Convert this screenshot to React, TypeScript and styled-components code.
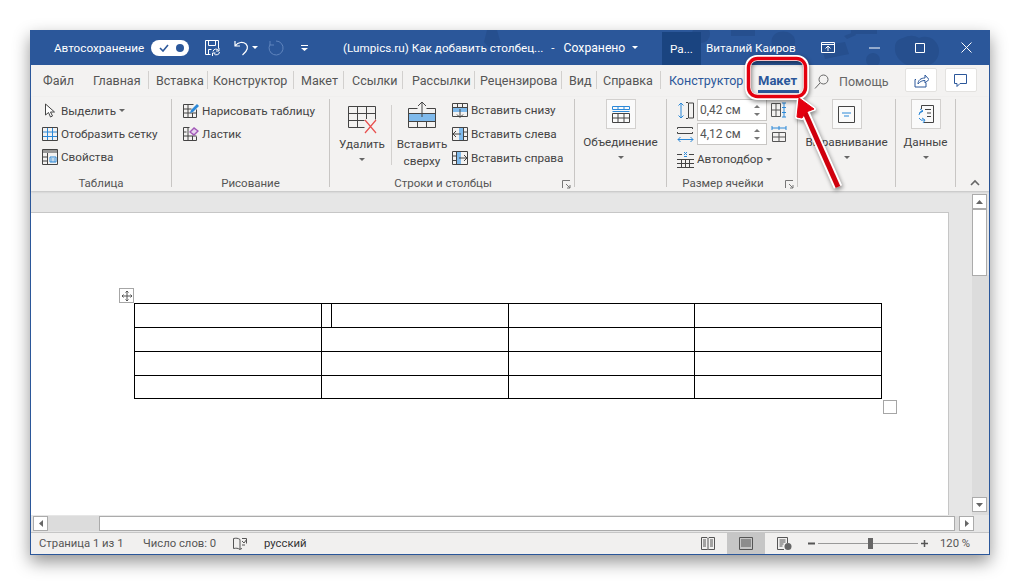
import type { ReactNode } from "react";
import styled, { createGlobalStyle } from "styled-components";

const BLUE = "#2b88d8";
const SKY = "#7fbaec";
const FONT = `Roboto, "Open Sans", "Liberation Sans", sans-serif`;

const GlobalStyle = createGlobalStyle`
  html, body {
    margin: 0;
    background: #fff;
  }
  body {
    font-family: ${FONT};
    font-size: 11.7px;
    color: #444;
  }
`;

const Stage = styled.div`
  position: relative;
  width: 1020px;
  height: 585px;
  padding: 30px;
  box-sizing: border-box;
  overflow: hidden;
`;

const Win = styled.div`
  width: 960px;
  height: 525px;
  box-sizing: border-box;
  display: flex;
  flex-direction: column;
  background: #e6e6e6;
  border: 1px solid #2b579a;
  border-top: 0;
  box-shadow: 0 7px 16px rgba(0, 0, 0, 0.42);
`;

const IcoSvg = styled.svg`
  flex: none;
  display: block;
`;

/* title bar */
const TitleBar = styled.div`
  position: relative;
  flex: 0 0 35px;
  display: flex;
  align-items: center;
  background: #2b579a;
  color: #fff;
  white-space: nowrap;
  overflow: hidden;
`;

const Doodles = styled.svg`
  position: absolute;
  left: 0;
  top: 0;
`;

const Slot = styled.div<{ $w: number; $ml?: number }>`
  position: relative;
  flex: 0 0 ${(p) => p.$w}px;
  min-width: 0;
  margin-left: ${(p) => p.$ml ?? 0}px;
  display: flex;
  align-items: center;
`;

const DocName = styled.span<{ $ml?: number; $size?: number }>`
  margin-left: ${(p) => p.$ml ?? 0}px;
  font-size: ${(p) => p.$size ?? 11.7}px;
`;

const Toggle = styled.div`
  width: 38px;
  height: 16px;
  border-radius: 8px;
  background: #fff;
  display: flex;
  align-items: center;
  justify-content: space-between;
  padding: 0 5px 0 8px;
  box-sizing: border-box;
`;

const ToggleDot = styled.span`
  width: 8px;
  height: 8px;
  border-radius: 50%;
  background: #2b579a;
`;

const Account = styled.div`
  position: relative;
  flex: 0 0 39px;
  align-self: flex-end;
  height: 33px;
  display: flex;
  align-items: center;
  justify-content: center;
  background: #1a4480;
`;

const Caret = styled.span<{ $color?: string; $ml?: number }>`
  display: inline-block;
  width: 0;
  height: 0;
  margin-left: ${(p) => p.$ml ?? 0}px;
  border-left: 3px solid transparent;
  border-right: 3px solid transparent;
  border-top: 3px solid ${(p) => p.$color ?? "#666"};
`;

/* tabs */
const TabRow = styled.div`
  flex: 0 0 32px;
  display: flex;
  align-items: center;
  background: #f3f2f1;
  white-space: nowrap;
`;

const Tab = styled.div<{ $w: number; $pad: number; $sep?: boolean; $blue?: boolean }>`
  position: relative;
  flex: 0 0 ${(p) => p.$w}px;
  box-sizing: border-box;
  height: 32px;
  line-height: 32px;
  padding-left: ${(p) => p.$pad}px;
  font-size: 12.5px;
  color: ${(p) => (p.$blue ? "#2b579a" : "#555")};
  overflow: hidden;
  &::after {
    content: "";
    display: ${(p) => (p.$sep ? "block" : "none")};
    position: absolute;
    right: 0;
    top: 6px;
    height: 18px;
    width: 1px;
    background: #d2d0ce;
  }
`;

const ActiveTab = styled(Tab)`
  font-size: 13px;
  font-weight: 700;
`;

const TabMark = styled.span`
  position: absolute;
  left: 0;
  right: 0;
  bottom: 4px;
  height: 3px;
  background: #2b579a;
`;

const HelpBox = styled.div`
  flex: 0 0 76px;
  margin-left: 15px;
  display: flex;
  align-items: center;
  gap: 10px;
  font-size: 12.5px;
  color: #666;
`;

const TopButton = styled.div<{ $ml: number }>`
  flex: 0 0 32px;
  height: 24px;
  margin: 0 0 2px ${(p) => p.$ml}px;
  display: flex;
  align-items: center;
  justify-content: center;
  background: #fff;
  border: 1px solid #e3e2e0;
  box-sizing: border-box;
  border-radius: 2px;
`;

/* ribbon */
const Ribbon = styled.div`
  flex: 0 0 94px;
  box-sizing: border-box;
  padding: 2px 0 4px;
  display: flex;
  background: #f3f2f1;
  box-shadow: 0 1px 2px rgba(0, 0, 0, 0.16);
  position: relative;
  z-index: 1;
`;

const Group = styled.div<{ $w: number; $last?: boolean }>`
  position: relative;
  flex: 0 0 ${(p) => p.$w}px;
  min-width: 0;
  box-sizing: border-box;
  display: flex;
  flex-direction: column;
  border-right: ${(p) => (p.$last ? "0" : "1px solid #c8c6c4")};
`;

const GroupBody = styled.div<{ $pad?: number }>`
  flex: 1;
  display: flex;
  padding-left: ${(p) => p.$pad ?? 0}px;
  white-space: nowrap;
`;

const GroupLabel = styled.div<{ $pr?: number }>`
  height: 16px;
  line-height: 16px;
  margin-bottom: -4px;
  padding-right: ${(p) => p.$pr ?? 0}px;
  text-align: center;
  font-size: 11.5px;
  color: #555;
`;

const Launcher = styled.svg`
  position: absolute;
  right: 3px;
  bottom: -2px;
`;

const SmallList = styled.div<{ $ml?: number; $mt?: number }>`
  display: flex;
  flex-direction: column;
  margin-left: ${(p) => p.$ml ?? 0}px;
  margin-top: ${(p) => p.$mt ?? 0}px;
`;

const SmallRow = styled.div<{ $h?: number }>`
  height: ${(p) => p.$h ?? 23}px;
  display: flex;
  align-items: center;
  gap: 3px;
`;

const BigButton = styled.div<{ $w: number; $ml?: number }>`
  flex: 0 0 ${(p) => p.$w}px;
  min-width: 0;
  margin-left: ${(p) => p.$ml ?? 0}px;
  display: flex;
  flex-direction: column;
  align-items: center;
  text-align: center;
  line-height: 17px;
`;

const BigIcon = styled.div<{ $top: number }>`
  height: 37px;
  box-sizing: border-box;
  padding-top: ${(p) => p.$top}px;
`;

const BoxIcon = styled.div`
  width: 30px;
  height: 30px;
  box-sizing: border-box;
  margin-bottom: 5px;
  display: flex;
  align-items: center;
  justify-content: center;
  background: #fafafa;
  border: 1px solid #d2d0ce;
`;

const CaretRow = styled.div`
  height: 13px;
  display: flex;
  align-items: center;
  justify-content: center;
`;

const VSep = styled.div`
  flex: 0 0 1px;
  height: 60px;
  margin: 6px 0 0 4px;
  background: #d2d0ce;
`;

const SizeRow = styled.div<{ $mb?: number; $mt?: number }>`
  height: 22px;
  margin-top: ${(p) => p.$mt ?? 0}px;
  margin-bottom: ${(p) => p.$mb ?? 2}px;
  display: flex;
  align-items: center;
  gap: 3px;
`;

const Spin = styled.div`
  width: 70px;
  height: 22px;
  box-sizing: border-box;
  padding: 0 6px 0 2px;
  margin-right: 1px;
  display: flex;
  align-items: center;
  justify-content: space-between;
  background: #fff;
  border: 1px solid #c8c6c4;
  font-size: 12px;
  color: #555;
`;

const SpinArrows = styled.div`
  display: flex;
  flex-direction: column;
  gap: 5px;
`;

const SpinUp = styled(Caret)`
  border-top: 0;
  border-bottom: 3px solid #777;
`;

const Collapse = styled.svg`
  position: absolute;
  left: 14px;
  bottom: 1px;
`;

/* document */
const Doc = styled.div`
  flex: 1;
  min-height: 0;
  display: flex;
`;

const PageArea = styled.div`
  flex: 0 0 941px;
  padding-top: 21px;
  box-sizing: border-box;
`;

const Page = styled.div`
  width: 918px;
  height: 303px;
  box-sizing: border-box;
  padding: 90px 0 0 103px;
  background: #fff;
  border-top: 1px solid #c6c6c6;
  border-right: 1px solid #c6c6c6;
`;

const TableWrap = styled.div`
  position: relative;
  width: 747px;
`;

const WordTable = styled.table`
  border-collapse: collapse;
  table-layout: fixed;
  width: 747px;
  td {
    border: 1px solid #000;
    height: 23px;
    padding: 0;
  }
  tr:last-child td {
    height: 22px;
  }
`;

const MoveHandle = styled.div`
  position: absolute;
  left: -15px;
  top: -15px;
  width: 15px;
  height: 15px;
  box-sizing: border-box;
  border: 1px solid #a6a6a6;
  display: flex;
  align-items: center;
  justify-content: center;
`;

const SizeHandle = styled.div`
  position: absolute;
  right: -16px;
  bottom: -15px;
  width: 14px;
  height: 14px;
  box-sizing: border-box;
  border: 1px solid #a6a6a6;
`;

const VScroll = styled.div`
  flex: 0 0 17px;
  display: flex;
  flex-direction: column;
  padding: 3px 1px 3px 0;
  box-sizing: border-box;
  background: linear-gradient(#e6e6e6 84px, #dcdcdc 84px);
`;

const ScrollBtn = styled.div`
  width: 15px;
  height: 15px;
  flex: 0 0 15px;
  box-sizing: border-box;
  background: #fff;
  border: 1px solid #ababab;
  display: flex;
  align-items: center;
  justify-content: center;
`;

const VThumb = styled.div`
  width: 15px;
  height: 67px;
  box-sizing: border-box;
  background: #fff;
  border: 1px solid #ababab;
`;

const VTrack = styled.div`
  flex: 1;
`;

const HScroll = styled.div`
  flex: 0 0 17px;
  display: flex;
  align-items: center;
  box-sizing: border-box;
  padding-left: 2px;
  background: #e6e6e6;
`;

const HTrack = styled.div<{ $w: number }>`
  flex: 0 0 ${(p) => p.$w}px;
  height: 15px;
  background: #dcdcdc;
`;

const HThumb = styled.div`
  flex: 0 0 856px;
  height: 15px;
  box-sizing: border-box;
  background: #fff;
  border: 1px solid #ababab;
`;

/* status bar */
const Status = styled.div`
  flex: 0 0 22px;
  display: flex;
  align-items: center;
  background: #f1f0ef;
  border-top: 1px solid #c6c6c6;
  box-sizing: border-box;
  font-size: 11.3px;
  color: #555;
  white-space: nowrap;
`;

const StatusItem = styled.div<{ $w: number; $ml?: number; $dark?: boolean }>`
  flex: 0 0 ${(p) => p.$w}px;
  min-width: 0;
  margin-left: ${(p) => p.$ml ?? 0}px;
  display: flex;
  align-items: center;
  color: ${(p) => (p.$dark ? "#333" : "#555")};
`;

const ViewButton = styled.div<{ $active?: boolean; $ml?: number }>`
  flex: 0 0 38px;
  height: 21px;
  margin-left: ${(p) => p.$ml ?? 0}px;
  display: flex;
  align-items: center;
  justify-content: center;
  background: ${(p) => (p.$active ? "#c6c6c6" : "transparent")};
`;

const Slider = styled.div`
  position: relative;
  flex: 0 0 100px;
  margin-left: 3px;
  height: 1px;
  background: #999;
`;

const SliderThumb = styled.span`
  position: absolute;
  left: 50px;
  top: -5px;
  width: 5px;
  height: 11px;
  background: #666;
`;

const Overlay = styled.svg`
  position: absolute;
  left: 0;
  top: 0;
  z-index: 2;
  pointer-events: none;
  filter: drop-shadow(1px 2px 2px rgba(0, 0, 0, 0.45));
`;

function Ico({ w = 16, h = 16, children }: { w?: number; h?: number; children: ReactNode }) {
  return (
    <IcoSvg width={w} height={h} viewBox={`0 0 ${w} ${h}`} fill="none">
      {children}
    </IcoSvg>
  );
}

const tabs = [
  { label: "Файл", w: 62, pad: 12 },
  { label: "Главная", w: 56, pad: 0, sep: true },
  { label: "Вставка", w: 59, pad: 7, sep: true },
  { label: "Конструктор", w: 86, pad: 5, sep: true },
  { label: "Макет", w: 50, pad: 7, sep: true },
  { label: "Ссылки", w: 59, pad: 8, sep: true },
  { label: "Рассылки", w: 72, pad: 9, sep: true },
  { label: "Рецензирова", w: 87, pad: 5, sep: true },
  { label: "Вид", w: 35, pad: 7, sep: true },
  { label: "Справка", w: 64, pad: 6, sep: true },
  { label: "Конструктор", w: 97, pad: 8, blue: true },
];

export default function App() {
  return (
    <Stage>
      <GlobalStyle />
      <Win>
        <TitleBar>
          <Doodles width="960" height="35" viewBox="0 0 960 35" fill="#264f8e">
            <path d="M872 8c6-3 11-3 16 0 10-4 20 3 20 13 0 8-6 14-12 14h-20c-7-3-13-10-12-18 0-5 3-8 8-9z" />
            <path d="M813 6l10-4 2 3-9 4zM790 16l24-4 4 12-24 5z" />
            <path d="M744 4c8-5 18-2 20 6 1 8-5 13-12 14-9 0-16-13-8-20z" />
            <path d="M820 0h26v4h-26zM700 0h24v6h-24zM456 0h10l4 14-10 6-7-8z" />
            <circle cx="670" cy="4" r="9" />
            <circle cx="842" cy="30" r="7" />
          </Doodles>
          <Slot $w={97} $ml={23}>Автосохранение</Slot>
          <Slot $w={38}>
            <Toggle>
              <Ico w={10} h={8}><path d="M1 4l3 3 5-6" stroke="#2b579a" strokeWidth="1.6" /></Ico>
              <ToggleDot />
            </Toggle>
          </Slot>
          <Slot $w={16} $ml={15}>
            <Ico h={17}>
              <path d="M1.5 15.500v-14h13v8M4.500 1.500v5h7v-5M1.500 15.500h5M4.500 15.500v-5h3" stroke="#fff" />
              <path d="M9 12.500a3 3 0 0 1 5.500-1M15.500 13a3 3 0 0 1-5.500 1.500" stroke="#fff" />
              <path d="M15 9v3h-3M8.500 17v-3h3" stroke="#fff" />
            </Ico>
          </Slot>
          <Slot $w={15} $ml={14}>
            <Ico w={15} h={17}>
              <path d="M1 2v5h5M1.500 6.500C4 3 9 2.500 12 5c2.500 2.500 2 6.500-3.500 11" stroke="#fff" strokeWidth="1.200" />
            </Ico>
          </Slot>
          <Slot $w={6} $ml={3}><Caret $color="#fff" /></Slot>
          <Slot $w={16} $ml={10}>
            <Ico h={17}>
              <path d="M8 2a7 7 0 1 1-6 3.500" stroke="#5f84bd" />
              <path d="M2 2v4h4" stroke="#5f84bd" />
            </Ico>
          </Slot>
          <Slot $w={7} $ml={17}>
            <Ico w={7} h={8}><path d="M0 1.500h7" stroke="#fff" /><path d="M0 4l3.500 3L7 4z" fill="#fff" /></Ico>
          </Slot>
          <Slot $w={319} $ml={35}>
            <DocName>(Lumpics.ru) Как добавить столбец...</DocName>
            <DocName $ml={8}>-</DocName>
            <DocName $ml={9} $size={12.2}>Сохранено</DocName>
            <Caret $color="#fff" $ml={7} />
          </Slot>
          <Account>Ра...</Account>
          <Slot $w={100} $ml={5}>Виталий Каиров</Slot>
          <Slot $w={14} $ml={15}>
            <Ico w={14} h={11}>
              <path d="M.5.500h13v10H.500zM.500 2.500h13" stroke="#fff" />
              <path d="M7 9V4.500M4.500 6.500L7 4l2.500 2.500" stroke="#fff" />
            </Ico>
          </Slot>
          <Slot $w={11} $ml={34}><Ico w={11} h={2}><path d="M0 1h11" stroke="#fff" /></Ico></Slot>
          <Slot $w={10} $ml={35}><Ico w={10} h={10}><path d="M.5.500h9v9h-9z" stroke="#fff" /></Ico></Slot>
          <Slot $w={11} $ml={36}><Ico w={11} h={11}><path d="M.5.500l10 10M10.500.500l-10 10" stroke="#fff" /></Ico></Slot>
        </TitleBar>

        <TabRow>
          {tabs.map((t, i) => (
            <Tab key={i} $w={t.w} $pad={t.pad} $sep={t.sep} $blue={t.blue}>{t.label}</Tab>
          ))}
          <ActiveTab $w={41} $pad={0} $blue>
            Макет
            <TabMark />
          </ActiveTab>
          <HelpBox>
            <Ico w={15} h={15}>
              <circle cx="9.500" cy="5.500" r="4.500" stroke="#666" />
              <path d="M6 9L1 14.500" stroke="#666" />
            </Ico>
            Помощь
          </HelpBox>
          <TopButton $ml={15}>
            <Ico w={15} h={15}>
              <path d="M2 6.500h-1v7.500h11v-4" stroke="#2b579a" />
              <path d="M4 11c0-4 3-6 7-6V2l4 4.500L11 10V7.500c-3 0-5 1-7 3.500z" stroke="#2b579a" />
            </Ico>
          </TopButton>
          <TopButton $ml={8}>
            <Ico w={14} h={13}>
              <path d="M.5.500h12v9H6l-3 3v-3H.500z" stroke="#2b579a" />
            </Ico>
          </TopButton>
        </TabRow>

        <Ribbon>
          <Group $w={141}>
            <GroupBody $pad={11}>
              <SmallList>
                <SmallRow>
                  <Ico>
                    <path d="M3.500 1v11l3-2.500 2 4.500 2-1-2-4h4z" stroke="#444" fill="#fff" />
                  </Ico>
                  Выделить <Caret />
                </SmallRow>
                <SmallRow>
                  <Ico h={14}>
                    <path d="M.5.500h15v13H.500z" stroke="#444" />
                    <path d="M5.500 1v12M10.500 1v12M1 5h14M1 9.500h14" stroke={BLUE} />
                  </Ico>
                  Отобразить сетку
                </SmallRow>
                <SmallRow>
                  <Ico>
                    <path d="M.5.500h15v15H.500z" stroke="#444" />
                    <path d="M1 1h14v3H1z" fill="#999" />
                    <path d="M1 8h5M1 12h5M5.500 4v11" stroke="#444" />
                    <path d="M8 8h6v5H8z" stroke={BLUE} />
                    <path d="M9 10h1.500M11.500 10H13M9 12h1.500M11.500 12H13" stroke={BLUE} />
                  </Ico>
                  Свойства
                </SmallRow>
              </SmallList>
            </GroupBody>
            <GroupLabel>Таблица</GroupLabel>
          </Group>

          <Group $w={158}>
            <GroupBody $pad={11}>
              <SmallList>
                <SmallRow>
                  <Ico h={15}>
                    <path d="M.5 1.500h10M.500 1.500v13h13v-8M5 2v12M.500 6h8M.500 10h13M9.500 10v4" stroke="#444" />
                    <path d="M7 10l1-3 6-6 2 2-6 6z" fill={BLUE} />
                  </Ico>
                  Нарисовать таблицу
                </SmallRow>
                <SmallRow>
                  <Ico h={15}>
                    <path d="M.5 1.500h6M.500 1.500v13h13v-4M5 2v12M.500 6h3M.500 10h13M9.500 10v4" stroke="#444" />
                    <path d="M6 6l5-5 5 4-5 5z" fill="#a259b8" />
                    <path d="M8 6l3-3 3 2-3 3z" fill="#e6d4ec" />
                  </Ico>
                  Ластик
                </SmallRow>
              </SmallList>
            </GroupBody>
            <GroupLabel>Рисование</GroupLabel>
          </Group>

          <Group $w={245}>
            <GroupBody>
              <BigButton $w={50} $ml={7}>
                <BigIcon $top={7}>
                  <Ico w={30} h={28}>
                    <path d="M1.500.500h27v13M1.500.500v21h16M1.500 7.500h27M1.500 14.500h16M10.500 1v20M19.500 1v12" stroke="#444" />
                    <path d="M18 14l11 13M29 14L18 27" stroke="#e8504f" strokeWidth="1.200" />
                  </Ico>
                </BigIcon>
                Удалить
                <CaretRow><Caret /></CaretRow>
              </BigButton>
              <VSep />
              <BigButton $w={44} $ml={8}>
                <BigIcon $top={2}>
                  <Ico w={28} h={27}>
                    <path d="M.5 7.500h9M18.500 7.500h9v19h-27v-19M.500 20.500h27M9.500 21v5M18.500 21v5" stroke="#444" />
                    <path d="M1 13h26v7H1z" fill={SKY} />
                    <path d="M1 12.500h26M14 1v15M10 5l4-4 4 4" stroke="#444" />
                  </Ico>
                </BigIcon>
                Вставить
                <br />
                сверху
              </BigButton>
              <SmallList $ml={8} $mt={-1}>
                <SmallRow $h={24}>
                  <Ico h={15}>
                    <path d="M.5.500h15v13H.500zM.500 4.500h15M5.500 1v3M10.500 1v3" stroke="#444" />
                    <path d="M1 5h14v4H1z" fill={SKY} />
                    <path d="M8 6v8M5 11.500l3 3 3-3" stroke="#444" />
                  </Ico>
                  Вставить снизу
                </SmallRow>
                <SmallRow $h={24}>
                  <Ico h={15}>
                    <path d="M.5.500h15v13H.500zM11.500 1v12M11.500 5h4M11.500 9.500h4" stroke="#444" />
                    <path d="M7 1h4v12H7z" fill={SKY} />
                    <path d="M9 7H1M4 4L1 7l3 3" stroke="#444" />
                  </Ico>
                  Вставить слева
                </SmallRow>
                <SmallRow $h={24}>
                  <Ico h={15}>
                    <path d="M.5.500h15v13H.500zM4.500 1v12M.500 5h4M.500 9.500h4" stroke="#444" />
                    <path d="M5 1h4v12H5z" fill={SKY} />
                    <path d="M7 7h8M12 4l3 3-3 3" stroke="#444" />
                  </Ico>
                  Вставить справа
                </SmallRow>
              </SmallList>
            </GroupBody>
            <GroupLabel $pr={18}>Строки и столбцы</GroupLabel>
            <Launcher width="9" height="9" viewBox="0 0 9 9" fill="none">
              <path d="M.5 8V.5H8M4 4l4 4M8 5v3H5" stroke="#777" />
            </Launcher>
          </Group>

          <Group $w={92}>
            <GroupBody>
              <BigButton $w={91}>
                <BoxIcon>
                  <Ico w={18} h={17}>
                    <path d="M.5.500h17v3H.500z" stroke={BLUE} />
                    <path d="M6 1v3M12 1v3" stroke={BLUE} />
                    <path d="M.5 5.500h17" stroke={BLUE} />
                    <path d="M.5 7.500h17v9H.500zM.500 12h17M6 8v8M12 8v8" stroke="#444" />
                  </Ico>
                </BoxIcon>
                Объединение
                <CaretRow><Caret /></CaretRow>
              </BigButton>
            </GroupBody>
            <GroupLabel />
          </Group>

          <Group $w={131}>
            <GroupBody $pad={10}>
              <SmallList>
                <SizeRow>
                  <Ico w={17} h={17}>
                    <path d="M4 1v15M1.500 3.500L4 1l2.500 2.500M1.500 13.500L4 16l2.500-2.500" stroke={BLUE} />
                    <path d="M11.500 1h5v15h-5zM9 .500h2M9 16.500h2" stroke="#444" />
                  </Ico>
                  <Spin>
                    0,42 см
                    <SpinArrows><SpinUp /><Caret $color="#777" /></SpinArrows>
                  </Spin>
                  <Ico w={17} h={16}>
                    <path d="M.5 1.500h9v13h-9zM.500 8h9M5 2v12" stroke="#555" />
                    <path d="M13 1v14M11 1h4M11 15h4M11 5.500h4M11 10.500h4" stroke={BLUE} />
                  </Ico>
                </SizeRow>
                <SizeRow>
                  <Ico w={17} h={17}>
                    <path d="M.5 1.500h15M.500 7.500h15M.500 1.500v1.500M15.500 1.500v1.500M.500 6v1.500M15.500 6v1.500" stroke="#444" />
                    <path d="M1 13.500h15M3.500 11L1 13.500 3.500 16M13.500 11L16 13.500 13.500 16" stroke={BLUE} />
                  </Ico>
                  <Spin>
                    4,12 см
                    <SpinArrows><SpinUp /><Caret $color="#777" /></SpinArrows>
                  </Spin>
                  <Ico w={17} h={17}>
                    <path d="M1 2h14M1 0v4M8 0v4M15 0v4" stroke={BLUE} />
                    <path d="M1.500 6.500h13v9h-13zM8 7v8M2 11h13" stroke="#555" />
                  </Ico>
                </SizeRow>
                <SizeRow $mb={0} $mt={1}>
                  <Ico w={17} h={17}>
                    <path d="M0 3.500h5M12 3.500h5M0 8.500h17M0 12.500h17M0 16.500h17M4.500 9v8M8.500 9v8M12.500 9v8" stroke="#444" />
                    <path d="M7 1l3 3M10 1L7 4M7 5.500h3" stroke={BLUE} />
                  </Ico>
                  Автоподбор <Caret />
                </SizeRow>
              </SmallList>
            </GroupBody>
            <GroupLabel $pr={18}>Размер ячейки</GroupLabel>
            <Launcher width="9" height="9" viewBox="0 0 9 9" fill="none">
              <path d="M.5 8V.5H8M4 4l4 4M8 5v3H5" stroke="#777" />
            </Launcher>
          </Group>

          <Group $w={98}>
            <GroupBody>
              <BigButton $w={97}>
                <BoxIcon>
                  <Ico w={17} h={17}>
                    <path d="M.5.500h16v16H.500z" stroke="#444" />
                    <path d="M4 7h9M6 10h5" stroke={BLUE} />
                  </Ico>
                </BoxIcon>
                Выравнивание
                <CaretRow><Caret /></CaretRow>
              </BigButton>
            </GroupBody>
            <GroupLabel />
          </Group>

          <Group $w={60}>
            <GroupBody>
              <BigButton $w={59}>
                <BoxIcon>
                  <Ico w={18} h={19}>
                    <path d="M4.500 4V.5h12v17H7" stroke="#444" />
                    <path d="M8 4.500h6M10 8h4M10 11.500h4" stroke="#444" />
                    <path d="M6 6a4 4 0 0 0-4 4M2 13a4 4 0 0 0 5 2" stroke={BLUE} />
                    <path d="M3 4l3 2-3 2M5 13l3 2-2 3" stroke={BLUE} />
                  </Ico>
                </BoxIcon>
                Данные
                <CaretRow><Caret /></CaretRow>
              </BigButton>
            </GroupBody>
            <GroupLabel />
          </Group>

          <Group $w={32} $last>
            <GroupBody />
            <Collapse width="10" height="7" viewBox="0 0 10 7" fill="none">
              <path d="M1 6l4-4 4 4" stroke="#666" strokeWidth="1.600" />
            </Collapse>
          </Group>
        </Ribbon>

        <Doc>
          <PageArea>
            <Page>
              <TableWrap>
                <MoveHandle>
                  <Ico w={12} h={12}>
                    <path d="M6 1v10M1 6h10M4.500 2.500L6 1l1.500 1.500M4.500 9.500L6 11l1.500-1.500M2.500 4.500L1 6l1.500 1.500M9.500 4.500L11 6 9.500 7.500" stroke="#555" />
                  </Ico>
                </MoveHandle>
                <WordTable>
                  <colgroup>
                    <col width={187} />
                    <col width={10} />
                    <col width={177} />
                    <col width={186} />
                    <col width={187} />
                  </colgroup>
                  <tbody>
                    <tr><td /><td /><td /><td /><td /></tr>
                    <tr><td /><td colSpan={2} /><td /><td /></tr>
                    <tr><td /><td colSpan={2} /><td /><td /></tr>
                    <tr><td /><td colSpan={2} /><td /><td /></tr>
                  </tbody>
                </WordTable>
                <SizeHandle />
              </TableWrap>
            </Page>
          </PageArea>
          <VScroll>
            <ScrollBtn><Ico w={7} h={4}><path d="M0 4l3.500-4L7 4z" fill="#666" /></Ico></ScrollBtn>
            <VThumb />
            <VTrack />
            <ScrollBtn><Ico w={7} h={4}><path d="M0 0l3.500 4L7 0z" fill="#666" /></Ico></ScrollBtn>
          </VScroll>
        </Doc>

        <HScroll>
          <ScrollBtn><Ico w={4} h={7}><path d="M4 0L0 3.500 4 7z" fill="#666" /></Ico></ScrollBtn>
          <HTrack $w={51} />
          <HThumb />
          <HTrack $w={4} />
          <ScrollBtn><Ico w={4} h={7}><path d="M0 0l4 3.500L0 7z" fill="#666" /></Ico></ScrollBtn>
        </HScroll>

        <Status>
          <StatusItem $w={84} $ml={8}>Страница 1 из 1</StatusItem>
          <StatusItem $w={71} $ml={20}>Число слов: 0</StatusItem>
          <StatusItem $w={14} $ml={19}>
            <Ico w={14} h={13}>
              <path d="M7 2.500C5 1 3 1 .5 1.500v10c2.500-.5 4.500-.5 6.500 1V2.500zM7 12.500c.500-.5 1-.8 2-1" stroke="#555" />
              <path d="M9 1.500h4.500v5M9 8h3M9 4l2 2 3-4" stroke="#555" />
            </Ico>
          </StatusItem>
          <StatusItem $w={42} $ml={17} $dark>русский</StatusItem>
          <ViewButton $ml={383}>
            <Ico w={14} h={13}>
              <path d="M.5.500h5.500L7 1.500 8 .5h5.500v12H8l-1 .5-1-.5H.500zM7 1.500v11" stroke="#555" />
              <path d="M2 3h3M2 5h3M2 7h3M2 9h3M9 3h3M9 5h3M9 7h3M9 9h3" stroke="#555" />
            </Ico>
          </ViewButton>
          <ViewButton $active>
            <Ico w={14} h={13}>
              <path d="M.5.500h13v12H.500z" stroke="#555" />
              <path d="M2 3h10M2 5h10M2 7h10M2 9h10" stroke="#555" />
            </Ico>
          </ViewButton>
          <ViewButton>
            <Ico w={15} h={13}>
              <path d="M7 12.500H.500V.500h10V6" stroke="#555" />
              <path d="M2.500 3h6M2.500 5h6M2.500 7h4M2.500 9h3" stroke="#555" />
              <circle cx="11" cy="9.500" r="3.500" fill="#666" />
            </Ico>
          </ViewButton>
          <StatusItem $w={7} $ml={5}>
            <Ico w={7} h={3}><path d="M0 1.500h7" stroke="#555" strokeWidth="2" /></Ico>
          </StatusItem>
          <Slider><SliderThumb /></Slider>
          <StatusItem $w={7} $ml={3}>
            <Ico w={7} h={7}><path d="M0 3.500h7M3.500 0v7" stroke="#555" strokeWidth="1.500" /></Ico>
          </StatusItem>
          <StatusItem $w={32} $ml={12}>120 %</StatusItem>
        </Status>
      </Win>

      <Overlay width="1020" height="585" viewBox="0 0 1020 585" fill="none">
        <path d="M838 187L803 108" stroke="#fff" strokeWidth="9" />
        <path d="M799 98l15 11-8 3-4 6-5-1z" fill="#fff" stroke="#fff" strokeWidth="4" strokeLinejoin="round" />
        <rect x="748" y="58" width="58" height="39" rx="9" stroke="#fff" strokeWidth="6" />
        <rect x="748.500" y="58.500" width="57" height="38" rx="9" stroke="#e4000f" strokeWidth="3.500" />
        <path d="M838 187L803 108" stroke="#d0000d" strokeWidth="5" />
        <path d="M799 98l15 11-8 3-4 6-5-1z" fill="#e4000f" stroke="#e4000f" strokeWidth="1" strokeLinejoin="round" />
      </Overlay>
    </Stage>
  );
}
